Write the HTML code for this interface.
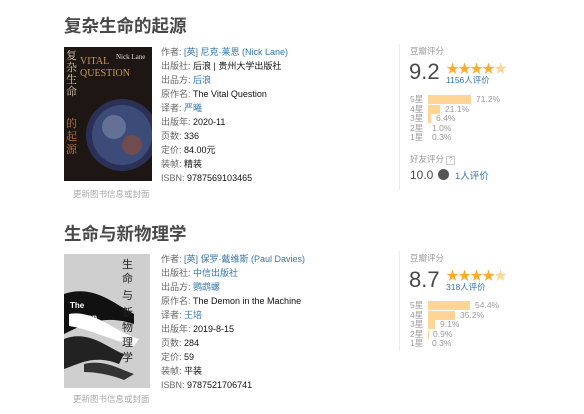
<!DOCTYPE html>
<html><head><meta charset="utf-8"><style>
*{margin:0;padding:0;box-sizing:border-box}
body{width:584px;height:414px;background:#fff;font-family:"Liberation Sans","Noto Sans CJK SC",sans-serif;color:#111;position:relative;overflow:hidden}
.a{position:absolute;white-space:nowrap}
h1{position:absolute;font-size:17.5px;font-weight:bold;color:#494949;left:64px;font-family:"Liberation Sans","Noto Sans CJK SC",sans-serif}
.info{position:absolute;left:161px;font-size:9px;line-height:14px;color:#111}
.info .l{color:#666}
.info a{color:#37a;text-decoration:none}
.cap{position:absolute;font-size:8.5px;color:#aaa;left:73px}
.panel{position:absolute;left:399px;border-left:1px solid #eaeaea}
.num{position:absolute;font-size:22px;color:#494949}
.stars{position:absolute;color:#ffac2d;font-size:13px;letter-spacing:-1px}
.cnt{position:absolute;font-size:8.5px;color:#37a}
.row{position:absolute;font-size:8.5px;color:#9b9b9b;height:10px;line-height:10px}
.bar{position:absolute;top:1px;height:9px;background:#ffd596;left:18px}
.pct{position:absolute;top:0}
</style></head><body>

<h1 style="top:13px">复杂生命的起源</h1>
<svg class="a" style="left:64px;top:47px" width="88" height="134" viewBox="0 0 88 134">
<rect width="88" height="134" fill="#1e1612"/>
<circle cx="58" cy="88" r="36" fill="#2b3156"/>
<circle cx="58" cy="88" r="30" fill="#41527f" opacity=".8"/>
<circle cx="50" cy="80" r="12" fill="#8e96b5" opacity=".5"/>
<circle cx="68" cy="98" r="10" fill="#a34c2a" opacity=".5"/>
<text x="2" y="12" font-size="11" fill="#d8c8b0" font-family="Noto Serif CJK SC,serif">复</text>
<text x="2" y="24" font-size="11" fill="#d8c8b0" font-family="Noto Serif CJK SC,serif">杂</text>
<text x="2" y="36" font-size="11" fill="#d8c8b0" font-family="Noto Serif CJK SC,serif">生</text>
<text x="2" y="48" font-size="11" fill="#d8c8b0" font-family="Noto Serif CJK SC,serif">命</text>
<text x="2" y="80" font-size="11" fill="#c07840" font-family="Noto Serif CJK SC,serif">的</text>
<text x="2" y="93" font-size="11" fill="#c07840" font-family="Noto Serif CJK SC,serif">起</text>
<text x="2" y="106" font-size="11" fill="#c07840" font-family="Noto Serif CJK SC,serif">源</text>
<text x="16" y="17" font-size="10" fill="#c09a60" font-family="Liberation Serif,serif">VITAL</text>
<text x="16" y="29" font-size="10" fill="#c09a60" font-family="Liberation Serif,serif">QUESTION</text>
<text x="52" y="12" font-size="7" fill="#ddd" font-family="Liberation Serif,serif">Nick Lane</text>
</svg>
<div class="info" style="top:45px">
<div><span class="l">作者:</span> <a>[英] 尼克·莱恩 (Nick Lane)</a></div>
<div><span class="l">出版社:</span> 后浪 | 贵州大学出版社</div>
<div><span class="l">出品方:</span> <a>后浪</a></div>
<div><span class="l">原作名:</span> The Vital Question</div>
<div><span class="l">译者:</span> <a>严曦</a></div>
<div><span class="l">出版年:</span> 2020-11</div>
<div><span class="l">页数:</span> 336</div>
<div><span class="l">定价:</span> 84.00元</div>
<div><span class="l">装帧:</span> 精装</div>
<div><span class="l">ISBN:</span> 9787569103465</div>
</div>
<div class="cap" style="top:188px">更新图书信息或封面</div>

<div class="panel" style="top:44px;height:146px"></div>
<div class="a" style="left:410px;top:45px;font-size:8.5px;color:#9b9b9b">豆瓣评分</div>
<div class="num" style="left:409px;top:59px">9.2</div>
<div class="stars" style="left:446px;top:58px">★★★★<span style="color:#ffd596">★</span></div>
<div class="cnt" style="left:446px;top:74px">1156人评价</div>
<div class="row" style="left:410px;top:94px;width:160px">5星<div class="bar" style="width:43px"></div><span class="pct" style="left:66px">71.2%</span></div>
<div class="row" style="left:410px;top:104px;width:160px">4星<div class="bar" style="width:12px"></div><span class="pct" style="left:35px">21.1%</span></div>
<div class="row" style="left:410px;top:113px;width:160px">3星<div class="bar" style="width:3px"></div><span class="pct" style="left:26px">6.4%</span></div>
<div class="row" style="left:410px;top:123px;width:160px">2星<span class="pct" style="left:22px">1.0%</span></div>
<div class="row" style="left:410px;top:132px;width:160px">1星<span class="pct" style="left:22px">0.3%</span></div>
<div class="a" style="left:410px;top:153px;font-size:8.5px;color:#9b9b9b">好友评分 <span style="display:inline-block;width:9px;height:9px;border:1px solid #ccc;font-size:7px;line-height:8px;text-align:center">?</span></div>
<div class="a" style="left:410px;top:168px;font-size:12px;color:#494949">10.0</div>
<div class="a" style="left:438px;top:169px;width:11px;height:11px;border-radius:50%;background:#555"></div>
<div class="cnt" style="left:455px;top:168px;font-size:9.5px">1人评价</div>

<h1 style="top:221px">生命与新物理学</h1>
<svg class="a" style="left:64px;top:254px" width="86" height="134" viewBox="0 0 86 134">
<rect width="86" height="134" fill="#cfcfcf"/>
<path d="M0 40 C30 30 50 50 70 60 L70 70 C40 60 20 70 0 80Z" fill="#111"/>
<path d="M0 85 C25 75 45 95 60 100 L55 110 C30 100 15 110 0 115Z" fill="#222"/>
<path d="M5 60 C30 55 55 80 75 85 L70 92 C45 85 25 75 5 72Z" fill="#fff"/>
<path d="M20 110 C40 105 55 115 70 120 L60 126 C45 120 30 118 20 118Z" fill="#333"/>
<text x="58" y="14" font-size="11" fill="#222" font-family="Noto Sans CJK SC,sans-serif">生</text>
<text x="58" y="28" font-size="11" fill="#222" font-family="Noto Sans CJK SC,sans-serif">命</text>
<text x="58" y="45" font-size="11" fill="#222" font-family="Noto Sans CJK SC,sans-serif">与</text>
<text x="58" y="62" font-size="11" fill="#222" font-family="Noto Sans CJK SC,sans-serif">新</text>
<text x="58" y="77" font-size="11" fill="#222" font-family="Noto Sans CJK SC,sans-serif">物</text>
<text x="58" y="92" font-size="11" fill="#222" font-family="Noto Sans CJK SC,sans-serif">理</text>
<text x="58" y="107" font-size="11" fill="#222" font-family="Noto Sans CJK SC,sans-serif">学</text>
<text x="6" y="54" font-size="8" font-weight="bold" fill="#fff">The</text>
<text x="6" y="66" font-size="8" font-weight="bold" fill="#fff">Demon</text>
</svg>
<div class="info" style="top:252px">
<div><span class="l">作者:</span> <a>[英] 保罗·戴维斯 (Paul Davies)</a></div>
<div><span class="l">出版社:</span> <a>中信出版社</a></div>
<div><span class="l">出品方:</span> <a>鹦鹉螺</a></div>
<div><span class="l">原作名:</span> The Demon in the Machine</div>
<div><span class="l">译者:</span> <a>王培</a></div>
<div><span class="l">出版年:</span> 2019-8-15</div>
<div><span class="l">页数:</span> 284</div>
<div><span class="l">定价:</span> 59</div>
<div><span class="l">装帧:</span> 平装</div>
<div><span class="l">ISBN:</span> 9787521706741</div>
</div>
<div class="cap" style="top:393px">更新图书信息或封面</div>

<div class="panel" style="top:251px;height:100px"></div>
<div class="a" style="left:410px;top:252px;font-size:8.5px;color:#9b9b9b">豆瓣评分</div>
<div class="num" style="left:409px;top:267px">8.7</div>
<div class="stars" style="left:446px;top:265px">★★★★<span style="color:#ffd596">★</span></div>
<div class="cnt" style="left:446px;top:281px">318人评价</div>
<div class="row" style="left:410px;top:300px;width:160px">5星<div class="bar" style="width:42px"></div><span class="pct" style="left:65px">54.4%</span></div>
<div class="row" style="left:410px;top:310px;width:160px">4星<div class="bar" style="width:27px"></div><span class="pct" style="left:50px">35.2%</span></div>
<div class="row" style="left:410px;top:319px;width:160px">3星<div class="bar" style="width:7px"></div><span class="pct" style="left:30px">9.1%</span></div>
<div class="row" style="left:410px;top:329px;width:160px">2星<div class="bar" style="width:1px"></div><span class="pct" style="left:23px">0.9%</span></div>
<div class="row" style="left:410px;top:338px;width:160px">1星<span class="pct" style="left:22px">0.3%</span></div>
</body></html>
